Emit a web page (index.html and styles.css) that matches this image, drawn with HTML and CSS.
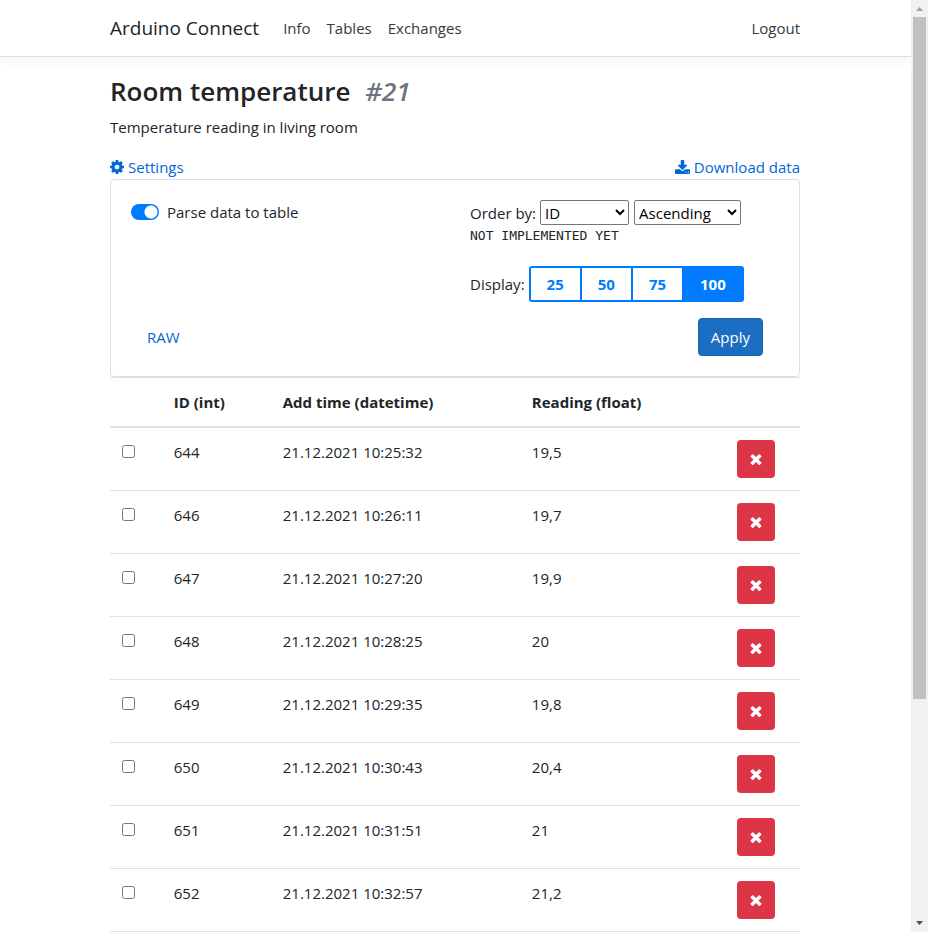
FILE: index.html
```html
<!DOCTYPE html>
<html lang="en">
<head>
<meta charset="utf-8">
<meta name="viewport" content="width=device-width, initial-scale=1">
<title>Room temperature - Arduino Connect</title>
<link rel="stylesheet" href="styles.css">
</head>
<body>
<svg class="sprite" aria-hidden="true">
  <symbol id="times" viewBox="302 238 1188 1316"><path d="M1490 1322q0 40-28 68l-136 136q-28 28-68 28t-68-28l-294-294-294 294q-28 28-68 28t-68-28l-136-136q-28-28-28-68t28-68l294-294-294-294q-28-28-28-68t28-68l136-136q28-28 68-28t68 28l294 294 294-294q28-28 68-28t68 28l136 136q28 28 28 68t-28 68l-294 294 294 294q28 28 28 68z"/></symbol>
</svg>
<div class="page">
  <header class="navbar">
    <nav class="container nav">
      <a class="brand" href="#">Arduino Connect</a>
      <a href="#">Info</a>
      <a href="#">Tables</a>
      <a href="#">Exchanges</a>
      <a class="logout" href="#">Logout</a>
    </nav>
  </header>
  <main class="container">
    <h1>Room temperature <em>#21</em></h1>
    <p class="description">Temperature reading in living room</p>
    <div class="actions">
      <a href="#settings"><svg class="icon cog" viewBox="128 128 1536 1536" aria-hidden="true"><path d="M1152 896q0-106-75-181t-181-75-181 75-75 181 75 181 181 75 181-75 75-181zm512-109v222q0 12-8 23t-20 13l-185 28q-19 54-39 91 35 50 107 138 10 12 10 25t-9 23q-27 37-99 108t-94 71q-12 0-26-9l-138-108q-44 23-91 38-16 136-29 186-7 28-36 28h-222q-14 0-24.500-8.500t-11.500-21.500l-28-184q-49-16-90-37l-141 107q-10 9-25 9-14 0-25-11-126-114-165-168-7-10-7-23 0-12 8-23 15-21 51-66.500t54-70.500q-27-50-41-99l-183-27q-13-2-21-12.500t-8-23.500v-222q0-12 8-23t19-13l186-28q14-46 39-92-40-57-107-138-10-12-10-24 0-10 9-23 26-36 98.500-107.500t94.500-71.500q13 0 26 10l138 107q44-23 91-38 16-136 29-186 7-28 36-28h222q14 0 24.500 8.500t11.500 21.500l28 184q49 16 90 37l142-107q9-9 24-9 13 0 25 10 129 119 165 170 7 8 7 22 0 12-8 23-15 21-51 66.500t-54 70.500q26 50 41 98l183 28q13 2 21 12.500t8 23.500z"/></svg>Settings</a>
      <a href="#download"><svg class="icon download" viewBox="64 0 1664 1536" aria-hidden="true"><path d="M1344 1344q0-26-19-45t-45-19-45 19-19 45 19 45 45 19 45-19 19-45zm256 0q0-26-19-45t-45-19-45 19-19 45 19 45 45 19 45-19 19-45zm128-224v320q0 40-28 68t-68 28h-1472q-40 0-68-28t-28-68v-320q0-40 28-68t68-28h465l135 136q58 56 136 56t136-56l136-136h464q40 0 68 28t28 68zm-325-569q17 41-14 70l-448 448q-18 19-45 19t-45-19l-448-448q-31-29-14-70 17-39 59-39h256v-448q0-26 19-45t45-19h256q26 0 45 19t19 45v448h256q42 0 59 39z"/></svg>Download data</a>
    </div>
    <form class="card" id="settings">
      <div class="options">
        <label class="switch"><input type="checkbox" role="switch" checked>Parse data to table</label>
        <div>
          <div class="field">
            <label for="order">Order by:</label>
            <select id="order" class="order"><option>ID</option><option>Add time</option><option>Reading</option></select>
            <select class="direction" aria-label="Direction"><option>Ascending</option><option>Descending</option></select>
          </div>
          <code>NOT IMPLEMENTED YET</code>
          <div class="field display" role="group" aria-labelledby="display">
            <span id="display">Display:</span>
            <div class="group">
              <button type="button">25</button>
              <button type="button">50</button>
              <button type="button">75</button>
              <button type="button" class="active" aria-pressed="true">100</button>
            </div>
          </div>
        </div>
      </div>
      <div class="footer">
        <a href="#raw">RAW</a>
        <button class="apply" type="submit">Apply</button>
      </div>
    </form>
    <table>
      <colgroup><col class="c-check"><col class="c-id"><col class="c-time"><col class="c-reading"><col class="c-delete"></colgroup>
      <thead>
        <tr><th></th><th>ID (int)</th><th>Add time (datetime)</th><th>Reading (float)</th><th></th></tr>
      </thead>
      <tbody>
        <tr><td><input type="checkbox" aria-label="Select 644"></td><td>644</td><td>21.12.2021 10:25:32</td><td>19,5</td><td><button class="delete" aria-label="Delete 644"><svg><use href="#times"/></svg></button></td></tr>
        <tr><td><input type="checkbox" aria-label="Select 646"></td><td>646</td><td>21.12.2021 10:26:11</td><td>19,7</td><td><button class="delete" aria-label="Delete 646"><svg><use href="#times"/></svg></button></td></tr>
        <tr><td><input type="checkbox" aria-label="Select 647"></td><td>647</td><td>21.12.2021 10:27:20</td><td>19,9</td><td><button class="delete" aria-label="Delete 647"><svg><use href="#times"/></svg></button></td></tr>
        <tr><td><input type="checkbox" aria-label="Select 648"></td><td>648</td><td>21.12.2021 10:28:25</td><td>20</td><td><button class="delete" aria-label="Delete 648"><svg><use href="#times"/></svg></button></td></tr>
        <tr><td><input type="checkbox" aria-label="Select 649"></td><td>649</td><td>21.12.2021 10:29:35</td><td>19,8</td><td><button class="delete" aria-label="Delete 649"><svg><use href="#times"/></svg></button></td></tr>
        <tr><td><input type="checkbox" aria-label="Select 650"></td><td>650</td><td>21.12.2021 10:30:43</td><td>20,4</td><td><button class="delete" aria-label="Delete 650"><svg><use href="#times"/></svg></button></td></tr>
        <tr><td><input type="checkbox" aria-label="Select 651"></td><td>651</td><td>21.12.2021 10:31:51</td><td>21</td><td><button class="delete" aria-label="Delete 651"><svg><use href="#times"/></svg></button></td></tr>
        <tr><td><input type="checkbox" aria-label="Select 652"></td><td>652</td><td>21.12.2021 10:32:57</td><td>21,2</td><td><button class="delete" aria-label="Delete 652"><svg><use href="#times"/></svg></button></td></tr>
      </tbody>
    </table>
  </main>
</div>
<div class="scrollbar" aria-hidden="true">
  <svg viewBox="0 0 17 17"><path fill="#a3a3a3" d="M5 11h7L8.500 7z"/></svg>
  <div class="track"><div class="thumb"></div></div>
  <svg viewBox="0 0 17 17"><path fill="#505050" d="M5 6h7L8.500 10z"/></svg>
</div>
</body>
</html>
```
FILE: styles.css
```css
* { box-sizing: border-box; }

body {
  margin: 0;
  display: flex;
  height: 100vh;
  overflow: hidden;
  background: #fff;
  color: #212529;
  font: 15px/24px "Segoe UI", "Open Sans", sans-serif;
}

button, select, input { font: inherit; margin: 0; }
button { cursor: pointer; }
a { color: #0366d6; text-decoration: none; }
.sprite { position: absolute; width: 0; height: 0; }

.page { flex: 1; min-width: 0; overflow: hidden; }
.container { max-width: 721px; margin: 0 auto; padding: 0 16px 0 15px; }

.navbar {
  border-bottom: 1px solid #dee2e6;
  box-shadow: 0 4px 12px rgba(0, 0, 0, .05);
}
.nav { display: flex; align-items: center; gap: 16px; height: 56px; }
.nav a { color: #343a40; }
.nav .brand { margin-right: 8px; font-size: 19px; color: #212529; }
.nav .logout { margin-left: auto; }

h1 { margin: 16px 0 6px; font-size: 26px; line-height: 36px; font-weight: 600; }
h1 em { margin-left: 8px; color: #6c757d; }
.description { margin: 0 0 16px; }

.actions { display: flex; justify-content: space-between; }
.actions a { display: flex; align-items: center; gap: 4px; }
.icon { fill: currentColor; height: 14px; }
.cog { width: 14px; }
.download { width: 15px; }

.card { padding: 20px; border: 1px solid #dfdfdf; border-radius: 4px; }
.options { display: grid; grid-template-columns: 1fr 1fr; gap: 30px; }
.switch { display: flex; align-items: center; gap: 8px; align-self: start; }
.switch input {
  appearance: none;
  width: 28px;
  height: 16px;
  border-radius: 8px;
  background: radial-gradient(circle at 20px 8px, #fff 6px, #007bff 7px);
}
.field { display: flex; align-items: center; gap: 4px; }
select { height: 25px; padding: 0; border: 1px solid #767676; border-radius: 2px; background: #fff; color: #000; }
.order { width: 89px; }
.direction { width: 107px; margin-left: 1px; }
code { display: block; font: 13px/22px Consolas, "DejaVu Sans Mono", monospace; }
.display { margin-top: 19px; }
.group { display: flex; }
.group button {
  height: 36px;
  margin-left: -2px;
  padding: 0 16px;
  border: 2px solid #007bff;
  background: #fff;
  color: #007bff;
  font-weight: 700;
}
.group button:first-child { margin-left: 0; border-radius: 3px 0 0 3px; }
.group button:last-child { border-radius: 0 3px 3px 0; }
.group .active { background: #007bff; color: #fff; }

.footer { display: flex; align-items: center; justify-content: space-between; margin-top: 16px; padding: 0 16px; }
.apply { height: 38px; padding: 0 12px; border: 1px solid #1861ac; border-radius: 4px; background: #1b6ec2; color: #fff; }

table { width: 100%; table-layout: fixed; border-collapse: separate; border-spacing: 0; }
th, td { padding: 12px; border-top: 1px solid #dee2e6; text-align: left; vertical-align: top; }
th { border-bottom: 2px solid #dee2e6; }
tbody tr:first-child td { border-top: 0; }
tbody tr:last-child td { border-bottom: 1px solid #dee2e6; }
.c-check { width: 7.5%; }
.c-id { width: 15.8%; }
.c-time { width: 36.1%; }
.c-reading { width: 29.7%; }
.c-delete { width: 10.9%; }
td input { display: block; width: 13px; height: 13px; margin: 5px 0; }
.delete {
  display: flex;
  align-items: center;
  justify-content: center;
  width: 38px;
  height: 38px;
  padding: 0;
  border: 0;
  border-radius: 4px;
  background: #dc3545;
}
.delete svg { width: 12px; height: 12px; fill: #fff; }

.scrollbar { display: flex; flex-direction: column; width: 17px; background: #f1f1f1; }
.scrollbar svg { width: 17px; height: 17px; }
.track { flex: 1; padding: 0 2px; }
.thumb { height: 76%; background: #c1c1c1; }
```
